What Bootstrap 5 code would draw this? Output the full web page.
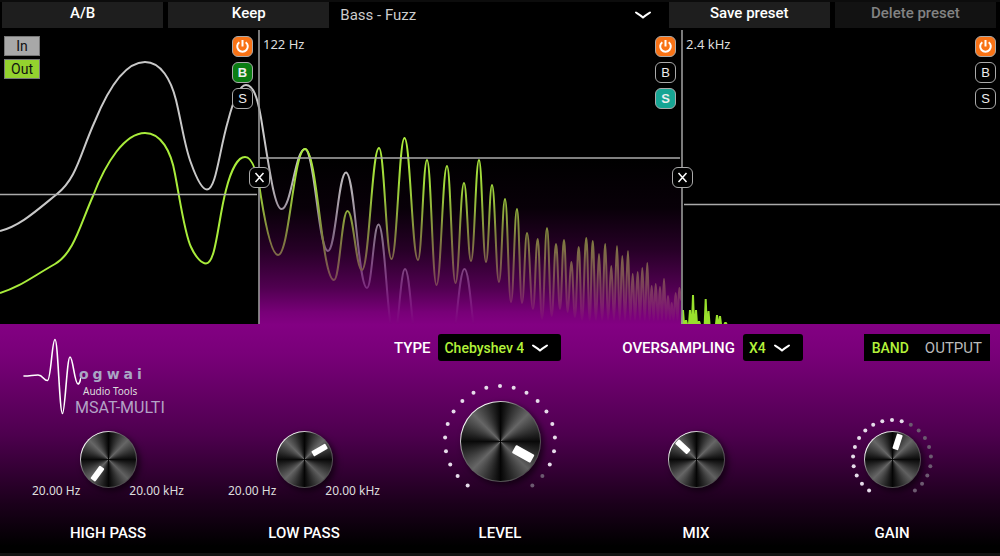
<!DOCTYPE html>
<html lang="en" data-bs-theme="dark">
<head>
<meta charset="utf-8">
<meta name="viewport" content="width=device-width, initial-scale=1">
<title>MSAT-MULTI</title>
<link href="https://cdn.jsdelivr.net/npm/bootstrap@5.3.0/dist/css/bootstrap.min.css" rel="stylesheet">
<style>
  :root { --lime: #b4f23a; --chevron: url("data:image/svg+xml,%3Csvg xmlns='http://www.w3.org/2000/svg' viewBox='0 0 16 8'%3E%3Cpath d='M1 1.5 C4 3.4 6 4.6 8 6.4 C10 4.6 12 3.4 15 1.5' fill='none' stroke='%23fff' stroke-width='2' stroke-linecap='round'/%3E%3C/svg%3E"); }
  body { background: #000; color: #fff; font-family: Roboto, "Liberation Sans", sans-serif; font-size: 15px; line-height: 20px; border-top: 2px solid #0c0c0c; border-bottom: 3px solid #121212; }
  .topbar { display: grid; grid-template-columns: 161fr 161fr 329fr 161fr 161fr; column-gap: 5px; padding: 0 4px 0 2px; }
  .topbar .btn { --bs-btn-color: #fff; --bs-btn-bg: #1e1e1e; --bs-btn-border-color: #1e1e1e; --bs-btn-disabled-bg: #121212; --bs-btn-disabled-border-color: #121212; --bs-btn-disabled-color: #828282; --bs-btn-disabled-opacity: 1; --bs-btn-hover-bg: #2c2c2c; height: 26px; padding: 0 8px 4px; border-radius: 0; font-size: 15px; line-height: 20px; font-weight: 500; }
  .pick { appearance: none; border: 0; border-radius: 3px; background: #000 var(--chevron) no-repeat right 13px center / 16px 8px; color: var(--lime); font-size: 14px; line-height: 20px; height: 27px; padding: 0 37px 0 6px; font-weight: 500; }
  .pick-preset { height: 26px; color: #ccc; background-position: right 13px center; font-size: 15px; font-weight: 400; }
  .spectrum { min-height: 296px; }
  .zones { display: grid; grid-template-columns: 259fr 423fr 318fr; }
  .zone { padding: 8px 6px 0 4px; }
  .zone:last-child { padding-right: 4px; }
  .stack-keys { gap: 3px; }
  .stack-chips { gap: 5px; }
  .scale, .freq { font-family: "Noto Sans", sans-serif; font-size: 12px; line-height: 16px; color: #ddd; }
  .freq { font-size: 13px; }
  .trace-key { width: 36px; height: 20px; padding: 0; border: 1px solid #777; background: #a8a8a8; color: #111; font-size: 14px; line-height: 18px; }
  .trace-key.out { background: #94d22e; }
  .chip { width: 21px; height: 21px; padding: 0; border: 1px solid #aaa; border-radius: 6px; background: #000; color: #eee; font: 13px/19px "Liberation Sans", sans-serif; display: block; }
  .chip.power { background: #f97316; } .chip.boost { background: #0a7d12; font-weight: 700; } .chip.solo { background: #17a594; font-weight: 700; }
  .chip svg { display: block; margin: auto; }
  .chip.cross { position: absolute; right: -11px; top: 139px; z-index: 2; }
  .panel { display: grid; grid-template-columns: repeat(5, 1fr); padding: 10px 10px 9px; background: linear-gradient(#830083, #780078 14%, #4e004f 48%, #1c001c 78%, #000 97%); }
  .brand { grid-area: 1 / 1 / 3 / 2; align-self: start; padding: 4px 0 0 13px; }
  .brand-words { margin-left: -6px; padding-top: 26px; }
  .brand-name { font: 700 14px/21px "DejaVu Sans", sans-serif; letter-spacing: 4px; color: #a9a6c4; }
  .brand-sub { font: 10px/12px "Noto Sans", sans-serif; color: #ddd; }
  .brand-model { color: #b3a3c6; font-size: 16px; line-height: 22px; }
  .settings { grid-area: 1 / 2 / 2 / 6; padding-left: 188px; }
  .field { gap: 8px; }
  .caption { font-weight: 500; font-size: 15px; }
  .tabs { background: #000; height: 27px; }
  .tabs button { background: none; border: 0; padding: 0 8px; color: #bbb; }
  .tabs button.active { color: var(--lime); font-weight: 500; font-size: 14px; }
  .control { grid-row: 2; margin-top: 20px; align-self: end; }
  .slot-1 { grid-column: 1; } .slot-2 { grid-column: 2; } .slot-3 { grid-column: 3; } .slot-4 { grid-column: 4; } .slot-5 { grid-column: 5; }
  .dial { width: 84px; height: 84px; margin: 0 auto; display: grid; place-items: center; }
  .dial > * { grid-area: 1 / 1; }
  .dial-lg { width: 120px; height: 120px; }
  .cap { width: 57px; height: 57px; border-radius: 50%; border: 1px solid transparent; box-shadow: 3px 3px 6px #0009;
    background: conic-gradient(#050505, #666 45deg, #090909 90deg, #606060 135deg, #050505 180deg, #666 225deg, #090909 270deg, #666 315deg, #050505) padding-box, linear-gradient(135deg, #999, #fff 18%, #666 38%, #444) border-box; }
  .dial-lg .cap { width: 81px; height: 81px; }
  .dial svg, .dial input { width: 100%; height: 100%; }
  .dial input { opacity: 0; margin: 0; cursor: pointer; }
  .scale { margin-top: -18px; margin-bottom: 2px; padding: 0 22px; }
  .knob-name { grid-row: 3; line-height: 22px; margin-top: 21px; text-align: center; font-weight: 500; }
</style>
</head>
<body class="d-flex flex-column min-vh-100">
<header class="topbar">
  <button class="btn" type="button">A/B</button>
  <button class="btn" type="button">Keep</button>
  <select class="pick pick-preset" aria-label="Preset"><option>Bass - Fuzz</option></select>
  <button class="btn" type="button">Save preset</button>
  <button class="btn" type="button" disabled>Delete preset</button>
</header>

<main class="d-flex flex-column flex-grow-1">
  <section class="spectrum zones position-relative flex-grow-1" aria-label="Spectrum">
    <svg class="position-absolute w-100 h-100" viewBox="0 28 1000 296" preserveAspectRatio="none" fill="none" aria-hidden="true">
      <defs>
        <linearGradient id="glow" x1="0" y1="158" x2="0" y2="324" gradientUnits="userSpaceOnUse">
          <stop offset="0" stop-color="#000"/><stop offset=".3" stop-color="#080008"/><stop offset=".55" stop-color="#260026"/><stop offset=".78" stop-color="#500050"/><stop offset=".93" stop-color="#780078"/><stop offset="1" stop-color="#820082"/>
        </linearGradient>
        <linearGradient id="outFade" x1="0" y1="130" x2="0" y2="324" gradientUnits="userSpaceOnUse">
          <stop offset="0" stop-color="#b0f43c"/><stop offset=".3" stop-color="#9ed43a"/><stop offset=".55" stop-color="#80803f"/><stop offset=".78" stop-color="#7b4855"/><stop offset="1" stop-color="#800080"/>
        </linearGradient>
        <linearGradient id="inFade" x1="0" y1="130" x2="0" y2="324" gradientUnits="userSpaceOnUse">
          <stop offset="0" stop-color="#ccc"/><stop offset=".3" stop-color="#b5b0b5"/><stop offset=".55" stop-color="#836c86"/><stop offset=".8" stop-color="#7c307f"/><stop offset="1" stop-color="#800080"/>
        </linearGradient>
        <clipPath id="low"><path d="M0 28H259V324H0Z"/></clipPath>
        <clipPath id="mid"><path d="M259 28H681V324H259Z"/></clipPath>
      </defs>
      <path d="M259 158H681V324H259Z" fill="url(#glow)"/>
      <g stroke-width="2">
        <g clip-path="url(#low)"><path class="trace-in" stroke="#c8c8c8"/><path class="trace-out" stroke="#a9ec3b"/></g>
        <g clip-path="url(#mid)"><path class="trace-in" stroke="url(#inFade)"/><path class="trace-out" stroke="url(#outFade)"/></g>
      </g>
      <path id="high" fill="#98e02c"/>
      <path d="M0 194.500H257M260 158H680M684 204.500H1000" stroke="#aaa" stroke-width="1.500"/>
      <path d="M259 30V324M682 30V324" stroke="#999" stroke-width="1.600"/>
    </svg>

    <div class="zone position-relative d-flex justify-content-between">
      <div class="stack-keys d-flex flex-column">
        <button class="trace-key" type="button">In</button>
        <button class="trace-key out" type="button">Out</button>
      </div>
      <div class="stack-chips d-flex flex-column">
        <button class="chip power" type="button" aria-label="Low band on"><svg width="15" height="15" viewBox="0 0 15 15" fill="none" stroke="#fff" stroke-width="2"><path d="M4.300 3.200a5.300 5.300 0 1 0 6.400 0M7.500 1v6.500"/></svg></button>
        <button class="chip boost" type="button">B</button>
        <button class="chip" type="button">S</button>
      </div>
      <button class="chip cross" type="button" aria-label="Remove crossover 1"><svg width="11" height="11" viewBox="0 0 11 11" stroke="#fff" stroke-width="1.500"><path d="M1.500 1l8 9M9.500 1l-8 9"/></svg></button>
    </div>
    <div class="zone position-relative d-flex justify-content-between">
      <span class="freq">122 Hz</span>
      <div class="stack-chips d-flex flex-column">
        <button class="chip power" type="button" aria-label="Mid band on"><svg width="15" height="15" viewBox="0 0 15 15" fill="none" stroke="#fff" stroke-width="2"><path d="M4.300 3.200a5.300 5.300 0 1 0 6.400 0M7.500 1v6.500"/></svg></button>
        <button class="chip" type="button">B</button>
        <button class="chip solo" type="button">S</button>
      </div>
      <button class="chip cross" type="button" aria-label="Remove crossover 2"><svg width="11" height="11" viewBox="0 0 11 11" stroke="#fff" stroke-width="1.500"><path d="M1.500 1l8 9M9.500 1l-8 9"/></svg></button>
    </div>
    <div class="zone position-relative d-flex justify-content-between">
      <span class="freq">2.4 kHz</span>
      <div class="stack-chips d-flex flex-column">
        <button class="chip power" type="button" aria-label="High band on"><svg width="15" height="15" viewBox="0 0 15 15" fill="none" stroke="#fff" stroke-width="2"><path d="M4.300 3.200a5.300 5.300 0 1 0 6.400 0M7.500 1v6.500"/></svg></button>
        <button class="chip" type="button">B</button>
        <button class="chip" type="button">S</button>
      </div>
    </div>
  </section>

  <section class="panel">
    <div class="brand d-flex">
      <svg class="flex-shrink-0" width="58" height="78" viewBox="0 0 58 78" fill="none" stroke="#fff" stroke-width="1.600" stroke-linecap="round" aria-hidden="true"><path d="M1 38C7 38 10 37 15 37C20 37 21 43 24.500 42.500C28 42 29 1.500 32 1.500C35 1.500 36.500 75.500 39.500 75.500C42 75.500 44 19 47 19C50 19 51.500 46 55 46C57 46 57 42 58 40"/></svg>
      <div class="brand-words">
        <div class="brand-name ps-1">ogwai</div>
        <div class="brand-sub ps-2">Audio Tools</div>
        <div class="brand-model">MSAT-MULTI</div>
      </div>
    </div>

    <div class="settings d-flex justify-content-between align-items-center">
      <div class="field d-flex align-items-center">
        <label class="caption" for="type">TYPE</label>
        <select class="pick" id="type"><option>Chebyshev 4</option></select>
      </div>
      <div class="field d-flex align-items-center">
        <label class="caption" for="over">OVERSAMPLING</label>
        <select class="pick" id="over"><option>X4</option></select>
      </div>
      <div class="tabs d-flex">
        <button class="active" type="button">BAND</button>
        <button type="button">OUTPUT</button>
      </div>
    </div>

    <div class="control slot-1">
      <div class="dial" data-angle="216"><div class="cap"></div><input type="range" id="hp" min="0" max="100" value="0"></div>
      <div class="scale d-flex justify-content-between"><span>20.00 Hz</span><span>20.00 kHz</span></div>
    </div>
    <div class="control slot-2">
      <div class="dial" data-angle="60"><div class="cap"></div><input type="range" id="lp" min="0" max="100" value="71"></div>
      <div class="scale d-flex justify-content-between"><span>20.00 Hz</span><span>20.00 kHz</span></div>
    </div>
    <div class="control slot-3">
      <div class="dial dial-lg" data-angle="119" data-lit="19"><div class="cap"></div><input type="range" id="level" min="0" max="100" value="91"></div>
    </div>
    <div class="control slot-4">
      <div class="dial" data-angle="313"><div class="cap"></div><input type="range" id="mix" min="0" max="100" value="34"></div>
    </div>
    <div class="control slot-5">
      <div class="dial" data-angle="18" data-lit="12"><div class="cap"></div><input type="range" id="gain" min="0" max="100" value="56"></div>
    </div>
    <label class="knob-name slot-1" for="hp">HIGH PASS</label>
    <label class="knob-name slot-2" for="lp">LOW PASS</label>
    <label class="knob-name slot-3" for="level">LEVEL</label>
    <label class="knob-name slot-4" for="mix">MIX</label>
    <label class="knob-name slot-5" for="gain">GAIN</label>
  </section>
</main>

<script src="https://cdn.jsdelivr.net/npm/bootstrap@5.3.0/dist/js/bootstrap.bundle.min.js"></script>
<script>
  // Joins alternating peaks and troughs with level tangents.
  const wave = pts => pts.slice(1).map(([x, y], i) => {
    const [px, py] = pts[i], d = (x - px) * 0.42;
    return `C${px + d} ${py} ${x - d} ${y} ${x} ${y}`;
  }).join('');

  const input = 'M0 231C20 226 36 211 57 194C77 178 80 154 95 121C109 87 125 62 145 62C161 62 171 80 176 100C182 125 185 148 191 163C196 177 202 189.500 207 189.500C216 189.500 219 152 228 121C234 98 240 85 246 85C255 85 259 105 262 124C270 174 275 209 281.500 209'
    + wave([[281.5, 209], [305, 149], [328, 251], [346, 172.5], [367, 288], [378.5, 224.5], [394, 336], [405, 269], [418, 350], [450, 350], [464.500, 269], [479, 350]]);

  const output = 'M0 293C20 287 32 277 55 264C74 253 80 225 93 196C106 162 125 133 145 133C161 133 171 151 175 174C181 206 185 235 191 247C196 258 202 263.500 206 263.500C216 263.500 218 220 226 190C231 170 238 157 245 157C253 157 258 176 261 197C267 234 273 255 278 255'
    + wave([[278, 255], [305, 149], [334, 280], [347.5, 211], [362, 270], [379, 148], [391.5, 259], [404.5, 138], [418, 260], [427, 160], [436.500, 285], [447, 166], [455.5, 283], [464, 183], [471, 261], [479, 160], [486, 262], [492, 185], [499, 282], [505, 199], [511, 302], [517, 209], [522, 303], [527, 233], [533, 309], [537.7, 239], [542, 319], [547, 228], [551.7, 316], [556, 244], [560, 309], [564, 240], [567.7, 312], [571.3, 262], [575, 317], [578.7, 247], [582, 320], [586.3, 238], [589.7, 320], [592.7, 241], [596, 320], [599, 254], [602, 320], [605.3, 244], [608, 320], [611.3, 266], [614, 320], [617, 246], [619.700, 320], [622.3, 256], [625, 320], [628, 251], [630.3, 320], [632.7, 274], [635, 320], [637.7, 272], [640, 320], [642.3, 268], [644.8, 320], [647.3, 263], [649.5, 320], [651.7, 286], [653.7, 320], [655.7, 284], [658, 320], [660, 287], [662, 320], [664, 279], [666, 320], [668, 296], [670, 320], [671.700, 303], [673.5, 320], [675.7, 293], [677.5, 320], [679.3, 288], [681, 300]]);

  document.querySelectorAll('.trace-in').forEach(p => p.setAttribute('d', input));
  document.querySelectorAll('.trace-out').forEach(p => p.setAttribute('d', output));

  const spikes = [[683, 310], [686, 320], [690, 310], [693, 295], [696, 310], [699, 321], [705.7, 299], [708.5, 311], [717, 315], [720, 316], [725.5, 322]];
  document.getElementById('high').setAttribute('d', spikes.map(([x, y]) => `M${x - 2} 324L${x - 1} ${y}H${x + 1}L${x + 2} 324Z`).join(''));

  // Dials: 21 dots over 288 degrees, plus the pointer.
  document.querySelectorAll('.dial').forEach(el => {
    const big = el.classList.contains('dial-lg'), size = big ? 120 : 84, c = size / 2;
    const ring = big ? 55 : 39, lit = +el.dataset.lit || 0;
    let s = '';
    if (lit) for (let i = 0; i < 21; i++) {
      const a = (i * 14.4 - 144) * Math.PI / 180;
      s += `<circle cx="${c + ring * Math.sin(a)}" cy="${c - ring * Math.cos(a)}" r="2" fill="${i < lit ? '#e6dcea' : '#6c5a70'}"/>`;
    }
    const [w, h, top] = big ? [9, 21, 37] : [6, 16, 26];
    s += `<rect x="${c - w / 2}" y="${c - top}" width="${w}" height="${h}" rx="1" fill="#fff" transform="rotate(${el.dataset.angle} ${c} ${c})"/>`;
    el.querySelector('.cap').insertAdjacentHTML('afterend', `<svg viewBox="0 0 ${size} ${size}" aria-hidden="true">${s}</svg>`);
  });
</script>
</body>
</html>
